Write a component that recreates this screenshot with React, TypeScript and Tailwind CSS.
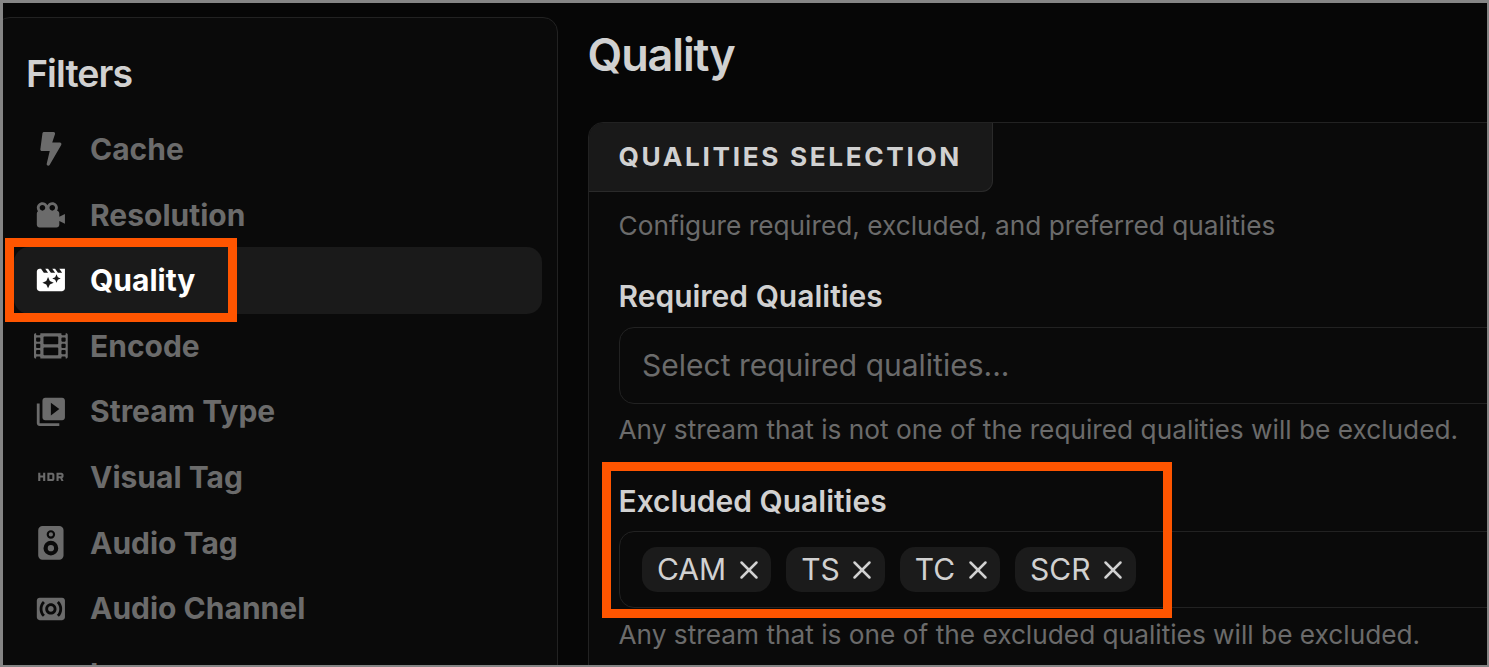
import React from 'react';
import { FaBolt, FaFilm } from 'react-icons/fa';
import { BiSolidCameraMovie } from 'react-icons/bi';
import { MdMovieFilter, MdVideoLibrary, MdHdrOn, MdSurroundSound } from 'react-icons/md';
import { BsSpeakerFill } from 'react-icons/bs';
import { X } from 'lucide-react';

const filters = [
    { label: 'Cache', icon: FaBolt },
    { label: 'Resolution', icon: BiSolidCameraMovie },
    { label: 'Quality', icon: MdMovieFilter, active: true },
    { label: 'Encode', icon: FaFilm },
    { label: 'Stream Type', icon: MdVideoLibrary },
    { label: 'Visual Tag', icon: MdHdrOn },
    { label: 'Audio Tag', icon: BsSpeakerFill },
    { label: 'Audio Channel', icon: MdSurroundSound },
    { label: 'Language', icon: null },
];

const excluded = ['CAM', 'TS', 'TC', 'SCR'];

const Sidebar = () => (
    <aside className="w-[563px] -ml-[8px] mt-[14px] h-[760px] shrink-0 rounded-[15px] border border-[#222222] bg-[#0a0a0a] pt-[28px] pl-[18px] pr-[15px]">
        <h2 className="pl-[12px] text-[37.5px] leading-[56px] font-semibold tracking-tight text-[#d1d1d1]">Filters</h2>
        <nav className="mt-[13.8px]">
            {filters.map(({ label, icon: Icon, active }) => (
                <div
                    key={label}
                    className={`flex items-center h-[66.63px] -mb-px rounded-[15px] pl-[20px] text-[30px] font-bold ${active ? 'bg-[#1a1a1a] text-white' : 'text-[#6b6b6b]'}`}
                >
                    <span className="w-[34px] mr-[22px] text-[33.75px]">{Icon && <Icon />}</span>
                    <span className="pt-[0.55px]">{label}</span>
                </div>
            ))}
        </nav>
    </aside>
);

const Chip = ({ label }: { label: string }) => (
    <span className="flex items-center h-[45px] rounded-[15px] bg-[#1b1b1b] pl-[15px] pr-[7.4px] gap-[7.6px] text-[30px] text-[#d1d1d1]">
        {label}
        <X size={30} strokeWidth={2} />
    </span>
);

const App = () => {
    return (
        <div className="relative w-[1489px] h-[667px] overflow-hidden bg-[#060606] border-t-3 border-l-3 border-r-2 border-b-2 border-[#858585] font-['Inter',sans-serif]">
            <div className="flex h-full overflow-hidden">
                <Sidebar />

                <main className="ml-[30px] w-[1000px] shrink-0">
                    <h1 className="mt-[22px] -ml-[0.5px] text-[45px] leading-[60px] font-semibold tracking-tight text-[#d1d1d1]">Quality</h1>

                    <section className="mt-[37px] h-[700px] rounded-[15px] border border-[#222222] bg-[#0a0a0a] overflow-hidden">
                        <div className="w-[404px] h-[69px] flex items-center border-r border-b border-[#2a2a2a] rounded-br-[11px] bg-[#191919] pl-[29.5px] text-[26.25px] font-bold tracking-widest text-[#d1d1d1]">
                            QUALITIES SELECTION
                        </div>
                        <div className="pl-[30px] whitespace-nowrap">
                            <p className="mt-[15px] -ml-[0.5px] text-[26.25px] leading-[37px] text-[#6b6b6b]">Configure required, excluded, and preferred qualities</p>

                            <label className="block mt-[32px] -ml-[0.5px] text-[30px] leading-[40px] font-semibold text-[#d1d1d1]">Required Qualities</label>
                            <div className="mt-[11px] h-[77px] flex items-center rounded-[15px] border border-[#222222] pl-[22px] text-[30px] text-[#6b6b6b]">
                                Select required qualities...
                            </div>
                            <p className="mt-[7px] -ml-[0.5px] text-[26.25px] leading-[38px] text-[#6b6b6b]">Any stream that is not one of the required qualities will be excluded.</p>

                            <label className="block mt-[32px] -ml-[0.5px] text-[30px] leading-[40px] font-semibold text-[#d1d1d1]">Excluded Qualities</label>
                            <div className="mt-[10px] h-[77px] flex items-center gap-[15px] rounded-[15px] border border-[#222222] pl-[22px]">
                                {excluded.map((label) => (
                                    <Chip key={label} label={label} />
                                ))}
                            </div>
                            <p className="mt-[8px] -ml-[0.5px] text-[26.25px] leading-[38px] text-[#6b6b6b]">Any stream that is one of the excluded qualities will be excluded.</p>
                        </div>
                    </section>
                </main>
            </div>

            {/* Highlight boxes */}
            <div className="absolute left-[2px] top-[235px] w-[232px] h-[84px] border-9 border-[#ff5500]" />
            <div className="absolute left-[599px] top-[459px] w-[570px] h-[156px] border-9 border-[#ff5500]" />
        </div>
    );
};

export default App;
